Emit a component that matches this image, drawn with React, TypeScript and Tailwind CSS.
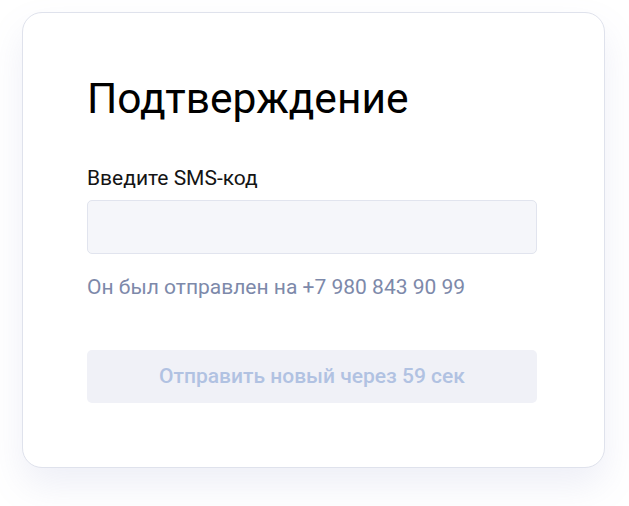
import React from "react";

export default function App() {
  return (
    <div
      className="w-[629px] h-[506px] bg-white flex justify-start pl-[22px] pt-[12px]"
      style={{ fontFamily: "Roboto, 'Noto Sans', sans-serif" }}
    >
      <div className="w-[583px] h-[456px] bg-white border border-[#dfe2ec] rounded-[20px] shadow-[0_18px_36px_rgba(120,135,190,0.13)] pl-[64px] pr-[67px] pt-[62px]">
        <h1 className="text-[42.5px] leading-[48px] font-normal text-black">
          Подтверждение
        </h1>
        <label className="block mt-[41px] text-[21px] leading-[28px] text-[#141414]">
          Введите SMS-код
        </label>
        <input
          type="text"
          className="block mt-[8px] w-full h-[54px] bg-[#f5f6fa] border border-[#e1e4ee] rounded-[5px] outline-none px-4 text-[18px]"
        />
        <p className="mt-[19px] text-[21px] leading-[28px] text-[#7d89aa]">
          Он был отправлен на +7 980 843 90 99
        </p>
        <button
          type="button"
          className="block mt-[49px] w-full h-[53px] bg-[#f0f1f7] rounded-[5px] text-[21px] font-medium text-[#b1c2e2]"
        >
          Отправить новый через 59 сек
        </button>
      </div>
    </div>
  );
}
